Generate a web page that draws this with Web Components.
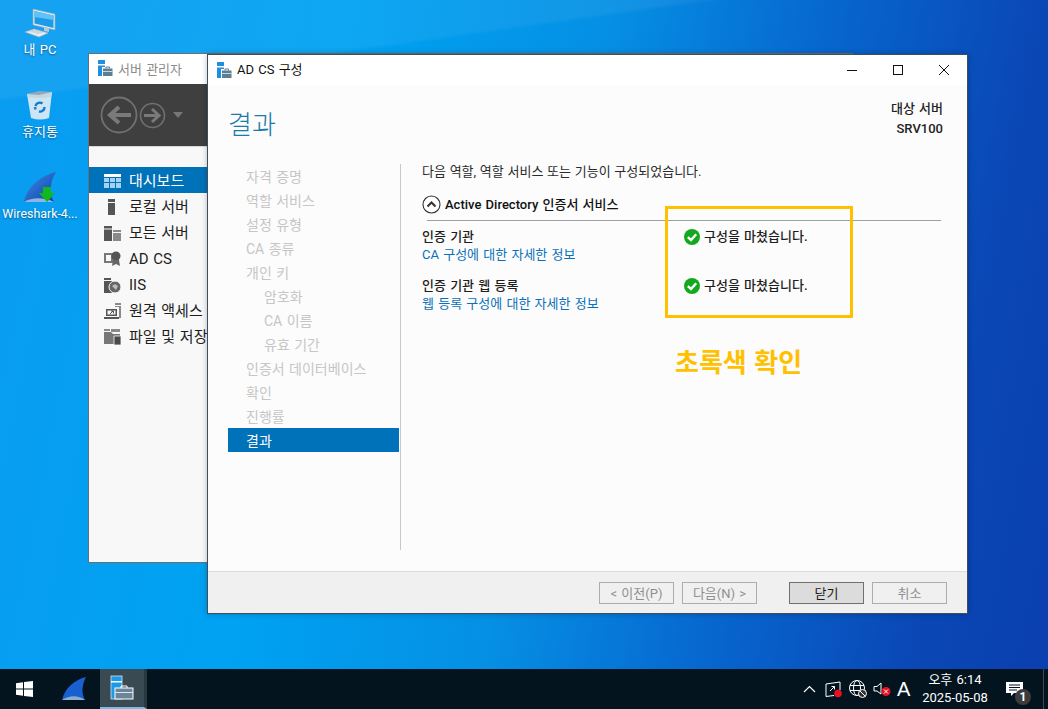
<!DOCTYPE html>
<html lang="ko">
<head>
<meta charset="utf-8">
<title>AD CS 구성</title>
<style>
html, body { margin: 0; padding: 0; width: 1048px; height: 709px; overflow: hidden; }
body { font-family: Roboto, "Noto Sans CJK KR", sans-serif; font-size: 13px; word-spacing: 1px; }
svg { display: block; }
</style>
</head>
<body>

<win-desktop>
    <desk-icon label="내 PC" slot="icons">
        <svg width="36" height="36" viewBox="0 0 36 36">
            <path d="M11 4 L33 9 V25 L11 20 Z" fill="#dfeef8" stroke="#8aa6ba" stroke-width=".8"/>
            <path d="M12.500 6 L31.500 10.500 V23 L12.500 18.500 Z" fill="#1c9be8"/>
            <path d="M12.500 6 L31.500 10.500 V15 L12.500 12 Z" fill="#5fc3f5"/>
            <path d="M22 22 L27 23.500 V27 L22 26 Z" fill="#b9c9d4"/>
            <path d="M3 27 L12 24 L26 28 L17 32 Z" fill="#e8edf0" stroke="#a4b2bb" stroke-width=".6"/>
            <path d="M7 26.500 L13 24.800 M9 27 L15 25.300 M11 27.600 L17 25.900 M13 28.200 L19 26.500 M15 28.800 L21 27.100" stroke="#b8c4cc" stroke-width=".7"/>
        </svg>
    </desk-icon>
    <desk-icon label="휴지통" slot="icons">
        <svg width="36" height="36" viewBox="0 0 36 36">
            <path d="M5 7 L30 5 L27 31 Q18 34 9 31 Z" fill="#dcebf5" opacity=".92"/>
            <path d="M5 7 L30 5 L29 10 Q17 12 6 10 Z" fill="#c3d6e4"/>
            <path d="M5 7 L17 4 L30 5 L17 8 Z" fill="#8fa9bb"/>
            <path d="M13.500 19 A4.500 4.500 0 0 1 20.500 16.500 M22.500 20 A4.500 4.500 0 0 1 17 24.500 M13.500 22.500 L13 20" stroke="#1878c8" stroke-width="2.400" fill="none"/>
        </svg>
    </desk-icon>
    <desk-icon label="Wireshark-4..." slot="icons" style="font-size:12.400px">
        <svg width="36" height="36" viewBox="0 0 36 36">
            <defs>
                <linearGradient id="finA" x1="0" y1="0" x2="1" y2="1">
                    <stop offset="0" stop-color="#3f8ee0"/>
                    <stop offset="1" stop-color="#0d3fb0"/>
                </linearGradient>
            </defs>
            <path d="M2 33 C5 18 18 7 34 3 C28 12 27 24 32 33 Z" fill="url(#finA)"/>
            <path d="M2 33 C10 28 22 28 32 33 Z" fill="#8db7de"/>
            <path d="M21 18 H29 V24 H33 L25 33 L17 24 H21 Z" fill="#12b81e"/>
        </svg>
    </desk-icon>

    <server-manager slot="windows"></server-manager>

    <wizard-window slot="windows" title-text="AD CS 구성" heading="결과">
        <div slot="server">대상 서버<br>SRV100</div>
        <wizard-step slot="steps">자격 증명</wizard-step>
        <wizard-step slot="steps">역할 서비스</wizard-step>
        <wizard-step slot="steps">설정 유형</wizard-step>
        <wizard-step slot="steps">CA 종류</wizard-step>
        <wizard-step slot="steps">개인 키</wizard-step>
        <wizard-step slot="steps" sub>암호화</wizard-step>
        <wizard-step slot="steps" sub>CA 이름</wizard-step>
        <wizard-step slot="steps" sub>유효 기간</wizard-step>
        <wizard-step slot="steps">인증서 데이터베이스</wizard-step>
        <wizard-step slot="steps">확인</wizard-step>
        <wizard-step slot="steps">진행률</wizard-step>
        <wizard-step slot="steps" active>결과</wizard-step>

        <result-panel slot="main" intro="다음 역할, 역할 서비스 또는 기능이 구성되었습니다." section="Active Directory 인증서 서비스">
            <status-row name="인증 기관" link="CA 구성에 대한 자세한 정보" status="구성을 마쳤습니다."></status-row>
            <status-row name="인증 기관 웹 등록" link="웹 등록 구성에 대한 자세한 정보" status="구성을 마쳤습니다."></status-row>
        </result-panel>

        <wizard-button slot="footer" disabled>&lt; 이전(P)</wizard-button>
        <wizard-button slot="footer" disabled style="margin-left:8px">다음(N) &gt;</wizard-button>
        <wizard-button slot="footer" primary style="margin-left:32px">닫기</wizard-button>
        <wizard-button slot="footer" disabled style="margin-left:8px">취소</wizard-button>
    </wizard-window>

    <note-box slot="windows" label="초록색 확인"></note-box>

    <task-bar slot="taskbar"></task-bar>
</win-desktop>

<script>
// small briefcase + server tower, same in both title bars
const TOOL_ICON = `
    <svg width="16" height="18" viewBox="0 0 16 18">
        <rect x="1" y="1" width="7" height="16" fill="#1f8fe0"/>
        <rect x="1" y="5" width="7" height="1.500" fill="#fff"/>
        <rect x="5" y="8" width="11" height="9" fill="#fff"/>
        <rect x="6" y="9.500" width="9.500" height="7.500" fill="#5d7f96"/>
        <rect x="6" y="12" width="9.500" height="1" fill="#c9d6de"/>
        <path d="M9 9.500 V8 H12.500 V9.500" fill="none" stroke="#5d7f96"/>
    </svg>`;

class WinDesktop extends HTMLElement
{
    constructor()
    {
        super();
        this.attachShadow({ mode: "open" });
        this.shadowRoot.innerHTML = `
            <style>
                :host {
                    display: flex;
                    flex-direction: column;
                    width: 1048px;
                    height: 709px;
                    overflow: hidden;
                }
                .wall {
                    flex: 1;
                    position: relative;
                    background:
                        linear-gradient(172deg, rgba(255,255,255,.05) 0 12%, rgba(255,255,255,0) 12.500%),
                        linear-gradient(101deg, #0a9cf0 0%, #00a2f2 30%, #0590e4 52%, #0768d0 70%, #0a48b6 88%, #0a3fae 100%);
                }
                .icons {
                    display: flex;
                    flex-direction: column;
                    gap: 29px;
                    width: 80px;
                    padding-top: 5px;
                }
            </style>
            <div class="wall">
                <div class="icons"><slot name="icons"></slot></div>
                <slot name="windows"></slot>
            </div>
            <slot name="taskbar"></slot>
        `;
    }
}

class DeskIcon extends HTMLElement
{
    constructor()
    {
        super();
        this.attachShadow({ mode: "open" });
        this.shadowRoot.innerHTML = `
            <style>
                :host {
                    display: flex;
                    flex-direction: column;
                    align-items: center;
                    height: 53px;
                    color: #fff;
                    font-size: 13px;
                    line-height: 17px;
                    white-space: nowrap;
                    text-shadow: 0 1px 2px rgba(0,0,0,.45);
                }
            </style>
            <slot></slot>
            <span id="label"></span>
        `;
        this.shadowRoot.querySelector("#label").textContent = this.getAttribute("label");
    }
}

class NavRow extends HTMLElement
{
    constructor()
    {
        super();
        this.attachShadow({ mode: "open" });
        this.shadowRoot.innerHTML = `
            <style>
                :host {
                    display: flex;
                    align-items: center;
                    height: 26px;
                    box-sizing: border-box;
                    padding-top: 2px;
                    line-height: 20px;
                    color: #1e1e1e;
                    font-size: 15px;
                    white-space: nowrap;
                    overflow: hidden;
                }
                :host([active]) { background: #0072b9; color: #fff; }
                .ic { width: 40px; padding-left: 15px; box-sizing: border-box; }
            </style>
            <div class="ic"><slot name="icon"></slot></div>
            <slot></slot>
        `;
    }
}

class ServerManager extends HTMLElement
{
    constructor()
    {
        super();
        this.attachShadow({ mode: "open" });
        this.shadowRoot.innerHTML = `
            <style>
                :host {
                    display: block;
                    position: absolute;
                    left: 88px;
                    top: 53px;
                    width: 765px;
                    height: 510px;
                    box-sizing: border-box;
                    border: 1px solid #6e6e6e;
                    background: #fff;
                    color: #8c8c8c;
                }
                .title {
                    display: flex;
                    align-items: center;
                    gap: 5px;
                    height: 30px;
                    padding: 0 0 2px 8px;
                    box-sizing: border-box;
                    font-size: 13px;
                }
                .tools {
                    display: flex;
                    align-items: center;
                    gap: 1px;
                    height: 62px;
                    padding-left: 11px;
                    background: #3f3f3f;
                    border-bottom: 1px solid #d8d8d8;
                }
                .side {
                    width: 119px;
                    height: 415px;
                    padding-top: 20px;
                    box-sizing: border-box;
                    background: #f8f8f8;
                }
                svg { display: block; }
            </style>
            <div class="title">${TOOL_ICON}<span>서버 관리자</span></div>
            <div class="tools">
                <svg width="38" height="38" viewBox="0 0 38 38">
                    <circle cx="19" cy="19" r="17.500" fill="none" stroke="#707070" stroke-width="1.800"/>
                    <path d="M31 19 H12 M19 11 L10 19 L19 27" fill="none" stroke="#7a7a7a" stroke-width="4"/>
                </svg>
                <svg width="27" height="27" viewBox="0 0 27 27">
                    <circle cx="13.500" cy="13.500" r="12" fill="none" stroke="#707070" stroke-width="1.600"/>
                    <path d="M5 13.500 H19 M13 7 L20 13.500 L13 20" fill="none" stroke="#7a7a7a" stroke-width="3"/>
                </svg>
                <svg width="16" height="8" viewBox="0 0 16 8" style="margin-left:3px"><path d="M3 1 H13 L8 7 Z" fill="#777"/></svg>
            </div>
            <div class="side">
                <nav-row active>
                    <svg slot="icon" width="17" height="14" viewBox="0 0 17 14">
                        <rect width="17" height="3" fill="#fff"/>
                        <path d="M0 4 H5 V8 H0 Z M6 4 H11 V8 H6 Z M12 4 H17 V8 H12 Z M0 9 H5 V14 H0 Z M6 9 H11 V14 H6 Z M12 9 H17 V14 H12 Z" fill="#a5d2ee"/>
                    </svg>
                    대시보드
                </nav-row>
                <nav-row>
                    <svg slot="icon" width="17" height="16" viewBox="0 0 17 16">
                        <path d="M4 0 H11 V3 H4 Z M4 4 H11 V16 H4 Z" fill="#555"/>
                    </svg>
                    로컬 서버
                </nav-row>
                <nav-row>
                    <svg slot="icon" width="17" height="15" viewBox="0 0 17 15">
                        <path d="M0 0 H8 V2.500 H0 Z M0 3.500 H8 V15 H0 Z" fill="#555"/>
                        <path d="M9 4 H17 V6 H9 Z M9 7 H17 V15 H9 Z" fill="#8a8a8a"/>
                    </svg>
                    모든 서버
                </nav-row>
                <nav-row>
                    <svg slot="icon" width="18" height="16" viewBox="0 0 18 16">
                        <path d="M0 2 H9 V12 H0 Z M2 4 V10 H7 V4 Z" fill="#777"/>
                        <circle cx="12" cy="5" r="4.500" fill="#555"/>
                        <path d="M9 9 L8 15 L12 13 L16 15 L15 9 Z" fill="#666"/>
                    </svg>
                    AD CS
                </nav-row>
                <nav-row>
                    <svg slot="icon" width="18" height="15" viewBox="0 0 18 15">
                        <path d="M0 0 H7 V2 H0 Z M0 3 H8 V15 H0 Z" fill="#555"/>
                        <circle cx="11" cy="9" r="6" fill="#666" stroke="#f8f8f8"/>
                        <path d="M8 8 L11 6 L14 8 L12 12 Z" fill="#bbb"/>
                    </svg>
                    IIS
                </nav-row>
                <nav-row>
                    <svg slot="icon" width="18" height="16" viewBox="0 0 18 16">
                        <path d="M11 0 H17 V2 H11 Z M11 3 H17 V15 H15 V4 H11 Z" fill="#8a8a8a"/>
                        <path d="M2 6 H13 V13 H2 Z M3.500 7.500 V11.500 H11.500 V7.500 Z" fill="#555"/>
                        <path d="M0 14 H15 V16 H0 Z" fill="#555"/>
                        <path d="M6 11 L9 8 M7 8 H9.500 V10.500" stroke="#555" fill="none"/>
                    </svg>
                    원격 액세스
                </nav-row>
                <nav-row>
                    <svg slot="icon" width="18" height="16" viewBox="0 0 18 16">
                        <path d="M0 0 H6 V2 H0 Z M7 0 H16 V3 H7 Z" fill="#8a8a8a"/>
                        <path d="M0 3 H7 L9 5 H16 V15 H0 Z" fill="#777"/>
                        <path d="M10 7 H17 V16 H10 Z" fill="#4a4a4a" stroke="#f8f8f8" stroke-width=".8"/>
                    </svg>
                    파일 및 저장
                </nav-row>
            </div>
        `;
    }
}

class WizardStep extends HTMLElement
{
    constructor()
    {
        super();
        this.attachShadow({ mode: "open" });
        this.shadowRoot.innerHTML = `
            <style>
                :host {
                    display: flex;
                    align-items: center;
                    height: 24px;
                    padding-left: 18px;
                    color: #c6c6c6;
                    font-size: 14px;
                    white-space: nowrap;
                }
                :host([sub]) { padding-left: 36px; }
                :host([active]) { background: #0072b9; color: #fff; }
            </style>
            <slot></slot>
        `;
    }
}

class WizardButton extends HTMLElement
{
    constructor()
    {
        super();
        this.attachShadow({ mode: "open" });
        this.shadowRoot.innerHTML = `
            <style>
                :host {
                    display: flex;
                    align-items: center;
                    justify-content: center;
                    width: 75px;
                    height: 22px;
                    box-sizing: border-box;
                    border: 1px solid #adadad;
                    color: #1a1a1a;
                    font-size: 13px;
                }
                :host([disabled]) { color: #8f8f8f; background: #f0f0f0; }
                :host([primary]) { background: #dcdcdc; border-color: #707070; }
            </style>
            <slot></slot>
        `;
    }
}

class StatusRow extends HTMLElement
{
    constructor()
    {
        super();
        this.attachShadow({ mode: "open" });
        this.shadowRoot.innerHTML = `
            <style>
                :host {
                    display: grid;
                    grid-template-columns: 262px 1fr;
                    height: 49px;
                    line-height: 18px;
                    color: #1e1e1e;
                    font-size: 13px;
                }
                a { color: #0a70b8; text-decoration: none; display: block; }
                #name { font-weight: 500; }
                .state { display: flex; align-items: center; gap: 4px; height: 18px; font-weight: 500; }
            </style>
            <div>
                <div id="name"></div>
                <a id="link"></a>
            </div>
            <div class="state">
                <svg width="16" height="16" viewBox="0 0 16 16">
                    <circle cx="8" cy="8" r="8" fill="#14a81e"/>
                    <path d="M3.800 8.200 L7 11 L12.200 5.200" fill="none" stroke="#fff" stroke-width="2.400"/>
                </svg>
                <span id="status"></span>
            </div>
        `;
        this.shadowRoot.querySelector("#name").textContent = this.getAttribute("name");
        this.shadowRoot.querySelector("#link").textContent = this.getAttribute("link");
        this.shadowRoot.querySelector("#status").textContent = this.getAttribute("status");
    }
}

class ResultPanel extends HTMLElement
{
    constructor()
    {
        super();
        this.attachShadow({ mode: "open" });
        this.shadowRoot.innerHTML = `
            <style>
                :host {
                    display: block;
                    color: #2a2a2a;
                    font-size: 13px;
                    line-height: 18px;
                }
                #intro { word-spacing: .5px; margin-top: -1px; }
                .sec {
                    display: flex;
                    align-items: center;
                    gap: 4px;
                    margin-top: 14px;
                    height: 19px;
                    font-weight: 500;
                    color: #111;
                }
                hr {
                    margin: 6px 0 0 5px;
                    border: 0;
                    border-top: 1px solid #a0a0a0;
                }
                .rows { padding-top: 7px; }
            </style>
            <div id="intro"></div>
            <div class="sec">
                <svg width="19" height="19" viewBox="0 0 19 19">
                    <circle cx="9.500" cy="9.500" r="8.500" fill="#fff" stroke="#333" stroke-width="1.100"/>
                    <path d="M5.500 11.500 L9.500 7.500 L13.500 11.500" fill="none" stroke="#333" stroke-width="2"/>
                </svg>
                <span id="section"></span>
            </div>
            <hr>
            <div class="rows"><slot></slot></div>
        `;
        this.shadowRoot.querySelector("#intro").textContent = this.getAttribute("intro");
        this.shadowRoot.querySelector("#section").textContent = this.getAttribute("section");
    }
}

class WizardWindow extends HTMLElement
{
    constructor()
    {
        super();
        this.attachShadow({ mode: "open" });
        this.shadowRoot.innerHTML = `
            <style>
                :host {
                    display: flex;
                    flex-direction: column;
                    position: absolute;
                    left: 207px;
                    top: 54px;
                    width: 761px;
                    height: 560px;
                    box-sizing: border-box;
                    border: 1px solid #3d4f5f;
                    background: #fcfcfc;
                    box-shadow: 0 0 6px rgba(0,0,0,.25);
                }
                .title {
                    display: flex;
                    align-items: center;
                    height: 30px;
                    flex: none;
                    box-sizing: border-box;
                    background: #fff;
                    padding: 0 0 0 8px;
                    gap: 5px;
                    color: #111;
                    font-size: 13px;
                }
                #cap { margin-top: -3px; }
                .title .caps { display: flex; margin-left: auto; }
                .caps div { width: 46px; height: 30px; display: flex; align-items: center; justify-content: center; }
                .head {
                    display: flex;
                    justify-content: space-between;
                    height: 70px;
                    flex: none;
                    padding: 9px 24px 0 20px;
                }
                h1 {
                    margin: 14px 0 0;
                    font-size: 26px;
                    font-weight: 300;
                    line-height: 34px;
                    color: #1a7aa8;
                }
                .srv {
                    margin-top: 5px;
                    text-align: right;
                    font-size: 13px;
                    line-height: 20px;
                    font-weight: 500;
                    color: #222;
                }
                .body { flex: 1; display: flex; min-height: 0; padding-left: 20px; }
                .steps { width: 171px; flex: none; }
                .main {
                    flex: 1;
                    margin: 0 0 21px 1px;
                    padding: 0 26px 0 21px;
                    border-left: 1px solid #c8c8c8;
                }
                .foot {
                    display: flex;
                    align-items: center;
                    height: 42px;
                    flex: none;
                    box-sizing: border-box;
                    padding: 0 20px 0 391px;
                    background: #f0f0f0;
                    border-top: 1px solid #dcdcdc;
                }
            </style>
            <div class="title">
                ${TOOL_ICON}<span id="cap"></span>
                <div class="caps">
                    <div><svg width="12" height="12" viewBox="0 0 12 12"><path d="M1 6.500 H11" stroke="#111"/></svg></div>
                    <div><svg width="12" height="12" viewBox="0 0 12 12"><rect x="1.500" y="1.500" width="9" height="9" fill="none" stroke="#111"/></svg></div>
                    <div><svg width="12" height="12" viewBox="0 0 12 12"><path d="M1 1 L11 11 M11 1 L1 11" stroke="#111"/></svg></div>
                </div>
            </div>
            <div class="head">
                <h1 id="heading"></h1>
                <div class="srv"><slot name="server"></slot></div>
            </div>
            <div class="body">
                <div class="steps"><slot name="steps"></slot></div>
                <div class="main"><slot name="main"></slot></div>
            </div>
            <div class="foot"><slot name="footer"></slot></div>
        `;
        this.shadowRoot.querySelector("#cap").textContent = this.getAttribute("title-text");
        this.shadowRoot.querySelector("#heading").textContent = this.getAttribute("heading");
    }
}

class NoteBox extends HTMLElement
{
    constructor()
    {
        super();
        this.attachShadow({ mode: "open" });
        this.shadowRoot.innerHTML = `
            <style>
                :host {
                    display: block;
                    position: absolute;
                    left: 665px;
                    top: 206px;
                    width: 188px;
                }
                .box { height: 112px; box-sizing: border-box; border: 3px solid #ffc000; }
                .txt {
                    margin: 28px 0 0 10px;
                    color: #ffc000;
                    font-size: 26px;
                    font-weight: 700;
                    line-height: 34px;
                    white-space: nowrap;
                }
            </style>
            <div class="box"></div>
            <div class="txt" id="t"></div>
        `;
        this.shadowRoot.querySelector("#t").textContent = this.getAttribute("label");
    }
}

class TaskBar extends HTMLElement
{
    constructor()
    {
        super();
        this.attachShadow({ mode: "open" });
        this.shadowRoot.innerHTML = `
            <style>
                :host {
                    display: flex;
                    align-items: center;
                    height: 40px;
                    flex: none;
                    background: #03141f;
                    color: #fff;
                    font-size: 13px;
                }
                .start { width: 48px; display: flex; justify-content: center; }
                .task { width: 52px; height: 40px; display: flex; align-items: center; justify-content: center; }
                .active {
                    width: 47px;
                    box-sizing: border-box;
                    background: #3a4a52;
                    border-bottom: 2px solid #7cb8e8;
                    border-right: 3px solid #2a3840;
                }
                .tray { margin-left: auto; display: flex; align-items: center; }
                .clock { width: 76px; text-align: center; line-height: 18px; margin-left: 4px; }
                .note { position: relative; width: 43px; height: 40px; margin-left: 7px; }
                .desk { width: 4px; height: 40px; border-left: 1px solid #3a4a52; }
                .badge {
                    position: absolute;
                    left: 7px;
                    top: 20px;
                    margin-left: 8px;
                    width: 16px;
                    height: 16px;
                    border-radius: 50%;
                    background: #3c3c3c;
                    font-size: 12px;
                    font-weight: 700;
                    line-height: 16px;
                    text-align: center;
                }
                .lang { font-size: 20px; margin-left: 6px; width: 16px; font-family: "Liberation Sans", sans-serif; }
                svg { display: block; }
            </style>
            <div class="start">
                <svg width="17" height="16" viewBox="0 0 17 16">
                    <path d="M0 2.300 L7 1.300 V7.500 H0 Z M8 1.100 L17 0 V7.500 H8 Z M0 8.500 H7 V14.700 L0 13.700 Z M8 8.500 H17 V16 L8 14.900 Z" fill="#fff"/>
                </svg>
            </div>
            <div class="task">
                <svg width="24" height="24" viewBox="0 0 24 24">
                    <path d="M0 23 C3 11 12 3 24 0 C20 8 19 16 23 23 Z" fill="#1a5fd0"/>
                    <path d="M0 23 C8 18 16 18 23 23 Z" fill="#8aaed0"/>
                </svg>
            </div>
            <div class="task active">
                <svg width="24" height="26" viewBox="0 0 24 26">
                    <rect x="1" y="1" width="11" height="23" fill="#1c9ae6" stroke="#cfe6f6" stroke-width=".8"/>
                    <rect x="1" y="6" width="11" height="1.500" fill="#fff"/>
                    <rect x="5" y="13" width="18" height="11" fill="#6b8599" stroke="#fff"/>
                    <rect x="5" y="17" width="18" height="1" fill="#dfe7ec"/>
                    <path d="M11 13 V11 H17 V13" fill="none" stroke="#fff"/>
                </svg>
            </div>
            <div class="tray">
                <svg width="13" height="8" viewBox="0 0 13 8"><path d="M1 7 L6.500 1.500 L12 7" fill="none" stroke="#fff" stroke-width="1.200"/></svg>
                <svg width="18" height="17" viewBox="0 0 18 17" style="margin-left:9px">
                    <path d="M1 3 L15 1 V9 M9 14.500 L1 15.500 V3" fill="none" stroke="#fff"/>
                    <path d="M5 10 L9.500 5.500 M6.500 5.500 H9.500 V8.500" stroke="#fff" fill="none"/>
                    <circle cx="13" cy="12.500" r="3.800" fill="#e81123"/>
                </svg>
                <svg width="18" height="18" viewBox="0 0 18 18" style="margin-left:6px">
                    <circle cx="8" cy="8" r="7.500" fill="none" stroke="#fff"/>
                    <ellipse cx="8" cy="8" rx="3.500" ry="7.500" fill="none" stroke="#fff"/>
                    <path d="M1 5.500 H15 M1 10.500 H15" stroke="#fff"/>
                    <circle cx="13.500" cy="13.500" r="4" fill="#333" stroke="#fff"/>
                    <path d="M11 11 L16 16" stroke="#fff"/>
                </svg>
                <svg width="18" height="16" viewBox="0 0 18 16" style="margin-left:6px">
                    <path d="M1 5.500 H4 L8 2 V13 L4 10 H1 Z" fill="none" stroke="#fff"/>
                    <rect x="8.500" y="6" width="9" height="9" rx="4.500" fill="#e81123"/>
                    <path d="M11 8.500 L15 12.500 M15 8.500 L11 12.500" stroke="#fff"/>
                </svg>
                <div class="lang">A</div>
                <div class="clock"><div>오후 6:14</div><div>2025-05-08</div></div>
                <div class="note">
                    <svg width="17" height="15" viewBox="0 0 17 15" style="margin:13px 0 0 6px">
                        <path d="M0 0 H17 V11 H8 L5 14 V11 H0 Z" fill="#fff"/>
                        <path d="M3 3 H14 M3 5.500 H14 M3 8 H11" stroke="#03141f"/>
                    </svg>
                    <div class="badge">1</div>
                </div>
                <div class="desk"></div>
            </div>
        `;
    }
}

window.customElements.define("win-desktop", WinDesktop);
window.customElements.define("desk-icon", DeskIcon);
window.customElements.define("nav-row", NavRow);
window.customElements.define("server-manager", ServerManager);
window.customElements.define("wizard-step", WizardStep);
window.customElements.define("wizard-button", WizardButton);
window.customElements.define("status-row", StatusRow);
window.customElements.define("result-panel", ResultPanel);
window.customElements.define("wizard-window", WizardWindow);
window.customElements.define("note-box", NoteBox);
window.customElements.define("task-bar", TaskBar);
</script>
</body>
</html>
